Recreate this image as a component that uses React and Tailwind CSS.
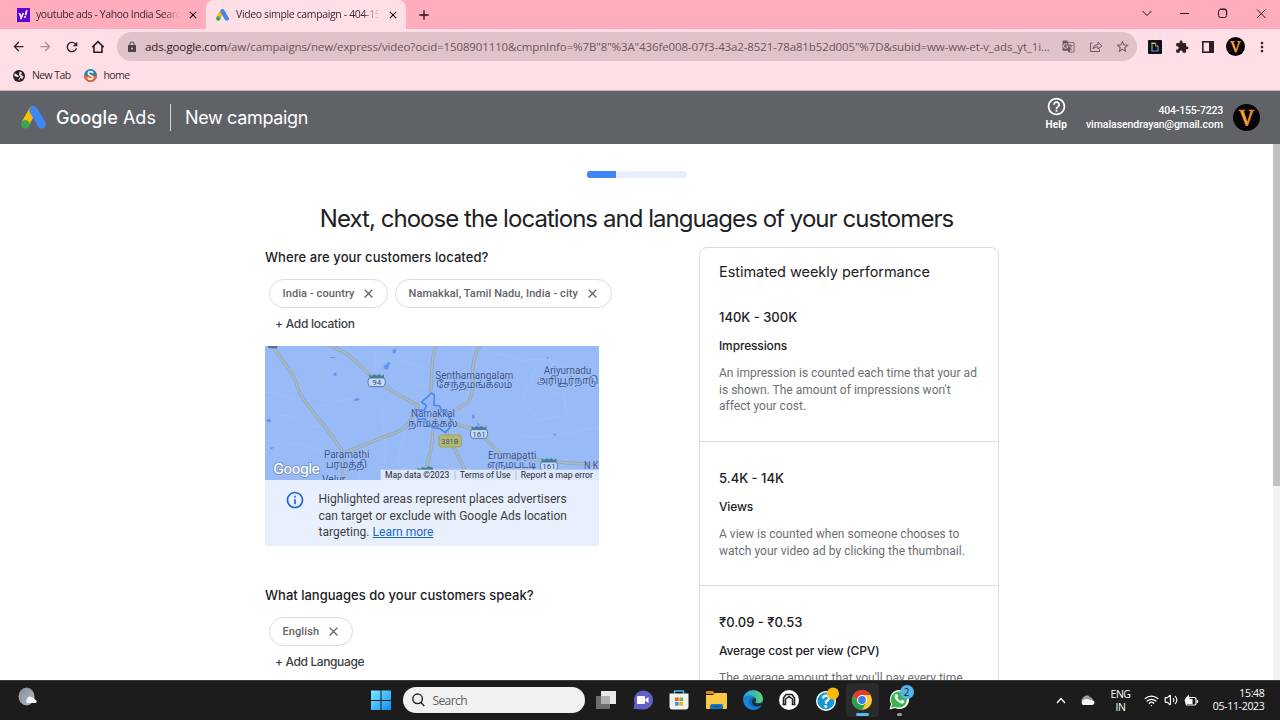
import React from "react";
import {
  MdArrowBack, MdArrowForward, MdRefresh, MdLock, MdStarBorder, MdExtension, MdGTranslate,
  MdHelpOutline, MdInfoOutline, MdMoreVert, MdClose, MdAdd,
} from "react-icons/md";
import { LuVolume2, LuWifi } from "react-icons/lu";

const SANS = "font-['Inter',sans-serif]";
const UI = "font-['Open_Sans',sans-serif]";

function AdsLogo({ className }) {
  return (
    <svg className={className} viewBox="0 0 74 68">
      <path d="M35 0 C29 1 25 6 22 12 L3 45 L24 57 L38 30 Z" fill="#fbbc04" />
      <path d="M37 13 L61 54" stroke="#4285f4" strokeWidth="25" strokeLinecap="round" />
      <circle cx="13" cy="54" r="12.5" fill="#34a853" />
    </svg>
  );
}

function VAvatar({ className }) {
  return (
    <svg className={className} viewBox="0 0 28 28">
      <circle cx="14" cy="14" r="14" fill="#050403" />
      <path d="M6 6h6.600v1.200h-1.300l3.600 10.900 3.300-10.900h-1.700V6h5.700v1.200h-1.200l-5.500 15.500h-2.200L7.200 7.200H6z" fill="#e8882a" />
      <path d="M9.300 7.600l4.700 13" stroke="#ffc566" strokeWidth=".8" />
    </svg>
  );
}

function Tabs() {
  return (
    <div className={`flex h-[29px] bg-[#ffadbc] text-[10.500px] text-[#3b2a30] ${UI}`}>
      <div className="flex w-[206px] items-center pl-[17px]">
        <svg className="h-[14px] w-[13px] shrink-0" viewBox="0 0 13 14">
          <rect width="13" height="14" fill="#5f01d1" />
          <path d="M2.2 5l1.9 4.2M6.3 5l-2.6 6.3" stroke="#fff" strokeWidth="1.6" fill="none" />
          <path d="M9.8 2.2L8.5 7.2" stroke="#fff" strokeWidth="1.7" />
          <circle cx="8" cy="9" r="1" fill="#fff" />
        </svg>
        <div className="ml-[6px] w-[144px] whitespace-nowrap tracking-[-0.4px] [mask-image:linear-gradient(to_right,#000_88%,transparent)]">youtube ads - Yahoo India Searc</div>
        <MdClose className="ml-[7px] size-[12px] shrink-0 text-black" />
      </div>
      <div className="flex w-[200px] items-center rounded-t-[8px] bg-[#ffdfe6] pl-[10px]">
        <AdsLogo className="h-[12px] w-[13px] shrink-0" />
        <div className="ml-[7px] w-[144px] whitespace-nowrap tracking-[-0.36px] [mask-image:linear-gradient(to_right,#000_88%,transparent)]">Video simple campaign - 404-15</div>
        <MdClose className="ml-[7px] size-[12px] shrink-0 text-black" />
      </div>
      <div className="flex w-[36px] items-center justify-center"><MdAdd className="size-[16px] text-[#24161a]" /></div>
      <div className="flex flex-1 items-center justify-end pb-[3px] text-[#24161a]">
        <svg className="h-[12px] w-[148px]" viewBox="0 0 148 12" fill="none" stroke="currentColor">
          <path d="M10.500 4l4.500 4.500L19.500 4" />
          <path d="M48 6.500h9" />
          <rect x="86.500" y="2.500" width="8" height="8" rx="2" />
          <path d="M88 2h4.500a2 2 0 0 1 2.200 2v4" />
          <path d="M125 2.500l8.500 8.500M133.500 2.500L125 11" />
        </svg>
      </div>
    </div>
  );
}

function Toolbar() {
  return (
    <div className={`flex h-[35px] items-center bg-[#ffdfe6] text-[#2b2024] ${UI}`}>
      <MdArrowBack className="ml-[11px] size-[15px]" />
      <MdArrowForward className="ml-[12px] size-[15px] text-[#a88d95]" />
      <MdRefresh className="ml-[11px] size-[16px]" />
      <svg className="ml-[11px] size-[14px]" viewBox="0 0 14 14" fill="none" stroke="currentColor" strokeWidth="1.6">
        <path d="M1.300 7.200L7 1.700l5.700 5.500M3 6v6.200h8V6" />
      </svg>
      <div className="ml-[12px] flex h-[29px] w-[1020px] shrink-0 items-center rounded-full bg-[#dfc3c9] text-[#6a575c]">
        <MdLock className="ml-[9px] size-[12px] text-[#4a4144]" />
        <div className="ml-[7px] w-[905px] whitespace-nowrap text-[11.500px] tracking-[-0.122px]"><span className="text-[#2b2024]">ads.google.com</span>/aw/campaigns/new/express/video?ocid=1508901110&amp;cmpnInfo=%7B"8"%3A"436fe008-07f3-43a2-8521-78a81b52d005"%7D&amp;subid=ww-ww-et-v_ads_yt_1i...</div>
        <MdGTranslate className="ml-[12px] size-[13px]" />
        <svg className="ml-[14px] h-[13px] w-[14px]" viewBox="0 0 14 13" fill="none" stroke="currentColor">
          <path d="M3.500 3H1.500v8.500h9V9.500M4 9c.3-3 2-4.300 5-4.400V2.300L13 5.800 9 9V6.900C6.700 6.900 5.200 7.500 4 9z" />
        </svg>
        <MdStarBorder className="ml-[12px] size-[15px]" />
      </div>
      <svg className="ml-[11px] h-[14px] w-[14px]" viewBox="0 0 14 14">
        <rect width="14" height="14" rx="1" fill="#141018" />
        <path d="M4 3v8" stroke="#19d98f" strokeWidth="1.200" /><path d="M3.500 11h7" stroke="#8b5cf6" strokeWidth="1.200" />
        <path d="M10 6v5" stroke="#21b7f3" strokeWidth="1.200" /><path d="M3.500 3.300H8" stroke="#f5e65b" strokeWidth="1.200" />
        <path d="M7.600 3v2.800H10" stroke="#f65c6a" strokeWidth="1.200" fill="none" />
      </svg>
      <MdExtension className="ml-[13px] size-[14px]" />
      <svg className="ml-[13px] h-[12px] w-[12px]" viewBox="0 0 12 12"><rect x=".8" y=".8" width="10.400" height="10.400" fill="none" stroke="#2b2024" strokeWidth="1.600" /><rect x="7" width="5" height="12" fill="#2b2024" /></svg>
      <VAvatar className="ml-[12px] size-[19px]" />
      <MdMoreVert className="ml-[9px] size-[16px]" />
    </div>
  );
}

function Bookmarks() {
  return (
    <div className={`flex h-[27px] items-center border-b border-[#c9b3b9] bg-[#ffdfe6] pb-[3px] text-[10.500px] text-[#3b2a30] ${UI}`}>
      <svg className="ml-[13px] size-[12px]" viewBox="0 0 12 12">
        <circle cx="6" cy="6" r="6" fill="#252124" />
        <path d="M1.500 3.500c2 .2 2.500 1.500 4 2 .8 1-.5 2-1.500 1.500L1.200 6zM6.500 1.500L9 2.500 8 5l2.500 1-1 3-2.500-1-.5 2.500-1-.5.500-2 1.500-1L6 4.500z" fill="#f7dbe1" />
      </svg>
      <span className="ml-[7px] w-[39px] whitespace-nowrap pt-px tracking-[-0.6px]">New Tab</span>
      <svg className="ml-[13px] size-[13px]" viewBox="0 0 13 13">
        <circle cx="6.500" cy="6.500" r="6.500" fill="#2380b8" />
        <path d="M0 6.500h13a6.500 6.500 0 0 1-13 0z" fill="#ee6132" />
        <path d="M9 4.200C8.500 2 4.200 2.200 4.300 4.500s4.600 1.700 4.500 4-4.500 2.300-4.900 0" fill="none" stroke="#fff" strokeWidth="1.600" />
      </svg>
      <span className="ml-[6.500px] pt-px tracking-[-0.6px]">home</span>
    </div>
  );
}

function AdsHeader() {
  return (
    <div className={`flex h-[53px] items-center bg-[#5f6368] text-white ${SANS}`}>
      <AdsLogo className="ml-[21px] h-[23px] w-[25px]" />
      <span className="ml-[10px] w-[100px] whitespace-nowrap text-[18px] tracking-[0.05px]"><span className="font-medium">Google</span> Ads</span>
      <div className="ml-[14px] h-[27px] w-px bg-[#d5d7d9]" />
      <span className="ml-[14px] text-[18px] tracking-[-0.35px]">New campaign</span>
      <div className="ml-auto mr-[19px] flex flex-col items-center pb-[7px] font-['Roboto',sans-serif]">
        <MdHelpOutline className="mt-[-1px] size-[21px]" />
        <span className="mt-[1px] text-[10px] font-bold leading-[13px] tracking-[0.2px]">Help</span>
      </div>
      <div className="text-right font-['Roboto',sans-serif] text-[10.500px] font-medium leading-[13.500px] tracking-[-0.06px]">
        <div className="tracking-[-0.2px]">404-155-7223</div>
        <div>vimalasendrayan@gmail.com</div>
      </div>
      <VAvatar className="ml-[10px] mr-[20px] size-[27px]" />
    </div>
  );
}

function Chip({ label, className }) {
  return (
    <div className={`flex h-[29px] items-center justify-between rounded-full border border-[#dadce0] pl-[12.500px] pr-[11px] font-['Roboto',sans-serif] text-[11px] font-medium text-[#5f6368] ${className}`}>
      <span className="whitespace-nowrap pt-px tracking-[0.09px]">{label}</span>
      <MdClose className="size-[15px]" />
    </div>
  );
}

function Shield({ x, y, n }) {
  return (
    <g transform={`translate(${x} ${y})`}>
      <path d="M-22 -20l7 5 8-5 7 4 7-4 8 5 7-5v14h-44z" fill="#3d8290" />
      <path d="M-22 -9h44c6 8 5 20-2 26h-40c-7-5-8-18-2-26z" fill="#c5d9f8" stroke="#5577aa" strokeWidth="3" />
      <text y="12" textAnchor="middle" fontSize="24" fill="#37507f">{n}</text>
    </g>
  );
}

const roads = [
  "M40 16C60 60 105 90 117 152C140 200 185 235 246 330L250 420",
  "M195 10C260 30 290 65 325 98C390 155 430 170 480 198",
  "M495 235C540 240 565 240 640 268C690 300 710 330 730 348C800 350 870 370 1018 372",
  "M528 16C510 70 520 110 512 160",
  "M660 16C620 85 655 130 628 184L590 207",
  "M475 196C450 235 455 260 400 280C340 300 310 320 255 335",
  "M518 270C522 320 505 350 492 420",
  "M560 270C580 325 600 350 618 395",
];
const lanes = [
  "M16 155C90 160 110 185 155 205C230 185 240 180 300 170", "M350 16C340 60 350 90 345 115",
  "M380 90C430 120 460 140 510 140", "M690 45L730 40 780 60 870 55 900 110 870 150 915 165 920 225 835 240 790 175 830 80",
  "M640 110C700 110 730 100 770 90", "M370 210C360 260 400 320 360 420", "M400 20L430 60 520 90",
  "M90 310C140 300 180 345 240 335", "M280 340C310 350 290 390 300 420", "M720 350C680 370 640 370 610 395",
  "M40 240C70 200 110 250 180 260", "M760 280C830 300 860 290 1018 260", "M430 260C440 320 400 340 420 380",
];
const lakes = ["M372 78l14-14 6 4-8 20-12-2z", "M398 30l10-6 2 12-10 4z", "M280 180l12-8 10 4-10 6z", "M220 100l8-4 4 8-8 4z", "M20 240l8-6 8 10-12 2z", "M860 50l8 0-4 6z", "M878 280l12 2-4 6z", "M30 322l12-2-6 8z", "M636 225l6-4 4 12-8 2z", "M652 245l8 8-4 6z", "M208 50l22 0-12 4z"];

function Place({ x, y, w, size = 30, children }) {
  return <text x={x} y={y} fontSize={size} textLength={w} lengthAdjust="spacingAndGlyphs">{children}</text>;
}

function MapView() {
  return (
    <svg className="block h-[134px] w-[334px] font-['Roboto','Noto_Sans_Tamil','Noto_Sans',sans-serif]" viewBox="16 17 1002 402" preserveAspectRatio="none">
      <rect x="16" y="16" width="1002" height="404" fill="#98baf6" />
      {lanes.map((d) => <path key={d} d={d} fill="none" stroke="#a1c0f7" strokeWidth="3" />)}
      {lakes.map((d) => <path key={d} d={d} fill="#6496f4" />)}
      {roads.map((d) => <path key={d} d={d} fill="none" stroke="#91a9b8" strokeWidth="10" />)}
      {roads.map((d) => <path key={d} d={d} fill="none" stroke="#a9bac4" strokeWidth="5" />)}
      <path d="M486 185L516 158 524 164 523 195 540 197 545 210 560 209 566 228 574 240 570 262 557 277 540 265 520 262 500 248 496 235 475 238 468 208 494 210 500 196z" fill="#91b6f8" fillOpacity=".5" stroke="#4a88f0" strokeWidth="5" />
      <Shield x={351} y={122} n="94" />
      <Shield x={658} y={277} n="161" />
      <Shield x={868} y={374} n="161" />
      <path d="M474 382l8 4 8-6 8 4 8-6 14 4v12h-46z" fill="#3d8290" />
      <path d="M24 16h30l-2 8h-26z" fill="#52729c" />
      <rect x="538" y="284" width="67" height="36" rx="8" fill="#b5ba6d" stroke="#95a364" strokeWidth="3" />
      <g fill="#36528e" stroke="#b0caf8" strokeWidth="2" paintOrder="stroke">
        <text x="545" y="311" fontSize="22" textLength="51" strokeWidth="0">381B</text>
        <Place x={527} y={115} w={234}>Senthamangalam</Place>
        <Place x={530} y={143} w={228}>சேந்தமங்கலம்</Place>
        <Place x={852} y={100} w={143}>Ariyurnadu</Place>
        <Place x={832} y={132} w={184}>அரியூர்நாடு</Place>
        <Place x={454} y={230} w={132}>Namakkal</Place>
        <Place x={446} y={260} w={148}>நாமக்கல்</Place>
        <Place x={193} y={354} w={136}>Paramathi</Place>
        <Place x={199} y={384} w={123}>பரமத்தி</Place>
        <Place x={685} y={355} w={145}>Erumapatti</Place>
        <Place x={683} y={384} w={147}>எருமபட்டி</Place>
        <Place x={187} y={427} w={70}>Velur</Place>
        <Place x={973} y={386} w={43}>N K</Place>
      </g>
      <text x="41" y="400" fontSize="43" fontWeight="500" fill="#fff" stroke="#6e8cc0" strokeWidth="4" paintOrder="stroke" textLength="140" fontFamily="Inter">Google</text>
      <rect x="363" y="388" width="655" height="32" fill="#dde7f8" />
      <path d="M586 392v28M769 392v28" stroke="#9aa9c4" strokeWidth="2" />
      <g fill="#222a35">
        <Place x={376} y={413} w={193} size={25}>Map data ©2023</Place>
        <Place x={600} y={413} w={153} size={25}>Terms of Use</Place>
        <Place x={783} y={413} w={217} size={25}>Report a map error</Place>
      </g>
    </svg>
  );
}

function Stat({ value, name, className, children }) {
  return (
    <div className={`pl-[19px] ${className}`}>
      <div className="text-[13px] font-medium leading-[20px] text-[#202124]">{value}</div>
      <div className="mt-[10px] text-[12px] font-medium leading-[18px] tracking-[-0.15px] text-[#202124]">{name}</div>
      <div className="mt-[10px] whitespace-nowrap font-['Roboto',sans-serif] text-[12px] leading-[16.700px] tracking-[0.020px] text-[#6b6f74]">{children}</div>
    </div>
  );
}

function Content() {
  return (
    <div className={`flex h-[536px] overflow-hidden bg-white text-[#202124] ${SANS}`}>
      <div className="flex w-[1273px] flex-col">
        <div className="mx-auto mt-[27px] h-[7px] w-[100px] shrink-0 overflow-hidden rounded-[3px] bg-[#e8f0fe]"><div className="h-full w-[29px] bg-[#4285f4]" /></div>
        <h1 className="mt-[25px] whitespace-nowrap text-center text-[24px] leading-[32px] tracking-[-0.95px]">Next, choose the locations and languages of your customers</h1>
        <div className="ml-[265px] mt-[12px] flex">
          <div className="w-[434px] shrink-0">
            <h2 className="text-[13px] font-medium leading-[20px] tracking-[0.07px]">Where are your customers located?</h2>
            <div className="ml-[4px] mt-[12px] flex gap-[7px]">
              <Chip label="India - country" className="w-[119px]" />
              <Chip label="Namakkal, Tamil Nadu, India - city" className="w-[217px]" />
            </div>
            <div className="ml-[10px] mt-[7px] text-[12px] font-medium leading-[18px] tracking-[-0.27px] text-[#3c4043]">+ Add location</div>
            <div className="mt-[13px] w-[334px] bg-[#e8f0fe]">
              <MapView />
              <div className="flex h-[66px]">
                <MdInfoOutline className="ml-[20px] mt-[10px] size-[20px] text-[#1a67d2]" />
                <div className="ml-[13.500px] mt-[11px] whitespace-nowrap font-['Roboto',sans-serif] text-[12px] leading-[16.700px] tracking-[0.015px] text-[#3c4043]">Highlighted areas represent places advertisers<br />can target or exclude with Google Ads location<br />targeting. <span className="text-[#1a67d2] underline">Learn more</span></div>
              </div>
            </div>
            <h2 className="mt-[39px] text-[13px] font-medium leading-[20px] tracking-[0.01px]">What languages do your customers speak?</h2>
            <div className="ml-[4px] mt-[12px] flex"><Chip label="English" className="w-[84px]" /></div>
            <div className="ml-[10px] mt-[7px] text-[12px] font-medium leading-[18px] tracking-[-0.38px] text-[#3c4043]">+ Add Language</div>
          </div>
          <div className="h-[500px] w-[300px] shrink-0 rounded-[8px] border border-[#dadce0]">
            <div className="ml-[19px] mt-[14px] text-[14.500px] leading-[20px] tracking-[-0.05px]">Estimated weekly performance</div>
            <Stat value="140K - 300K" name="Impressions" className="mt-[25px] h-[135px] border-b border-[#dadce0]">An impression is counted each time that your ad<br />is shown. The amount of impressions won't<br />affect your cost.</Stat>
            <Stat value="5.4K - 14K" name="Views" className="h-[144px] border-b border-[#dadce0] pt-[26px]">A view is counted when someone chooses to<br />watch your video ad by clicking the thumbnail.</Stat>
            <Stat value="₹0.09 - ₹0.53" name="Average cost per view (CPV)" className="pt-[26px]">The average amount that you'll pay every time</Stat>
          </div>
        </div>
      </div>
      <div className="w-[7px] bg-[#f1f1f1]"><div className="h-[342px] bg-[#c1c1c1]" /></div>
    </div>
  );
}

function TaskCell({ children, className = "" }) {
  return <div className={`flex h-full w-[36.600px] items-center justify-center ${className}`}>{children}</div>;
}

function Taskbar() {
  return (
    <div className={`flex h-[40px] items-center border-t border-[#3a3a3a] bg-[#1c1c1c] pb-px ${UI}`}>
      <svg className="mb-[6px] ml-[18px] h-[20px] w-[21px]" viewBox="0 0 21 20">
        <defs><linearGradient id="moon" x2="1" y2="1"><stop stopColor="#848b96" /><stop offset="1" stopColor="#b4bac2" /></linearGradient></defs>
        <ellipse cx="8.500" cy="9.500" rx="8" ry="9" fill="url(#moon)" />
        <path d="M9 16a3 3 0 0 1 0-4 3 3 0 0 1 5-1.600 3 3 0 0 1 3 2c2.500 1.500 2 3.600 0 3.600z" fill="#f3f4f7" />
      </svg>
      <svg className="ml-[332px] h-[20px] w-[20px]" viewBox="0 0 20 20">
        <defs><linearGradient id="win" x2="1" y2="1"><stop stopColor="#7bebff" /><stop offset="1" stopColor="#0b8df2" /></linearGradient></defs>
        <path d="M0 .5h9.500V10H0zM10.500.5H20V10h-9.500zM0 11h9.500v9H0zM10.500 11H20v9h-9.500z" fill="url(#win)" />
      </svg>
      <div className="ml-[12px] flex h-[26px] w-[182px] items-center rounded-full bg-[#f1f1f1] text-[12px] text-[#606060]">
        <svg className="ml-[9px] h-[14px] w-[13px]" viewBox="0 0 13 14" fill="none" stroke="#222" strokeWidth="1.400"><circle cx="5.600" cy="5.800" r="4.800" /><path d="M9 9.500l3.300 3.500" /></svg>
        <span className="ml-[7.500px] pt-px tracking-[-0.6px]">Search</span>
      </div>
      <div className="ml-[3px] flex h-full">
        <TaskCell><svg className="h-[20px] w-[20px]" viewBox="0 0 20 20"><rect x="5" y="1" width="15" height="13" fill="#e9e9e9" /><rect y="6" width="14" height="13" fill="#6d6d6d" /><rect x="5" y="6" width="9" height="8" fill="#b0b0b0" /></svg></TaskCell>
        <TaskCell><svg className="h-[20px] w-[20px]" viewBox="0 0 20 20"><path d="M.5 19l1-6A9.500 9.500 0 1 1 10 19.500z" fill="#6260c4" /><rect x="4" y="6" width="8" height="8" rx="1" fill="#fff" /><path d="M12.500 9l3-2v6l-3-2z" fill="#fff" /></svg></TaskCell>
        <TaskCell><svg className="h-[20px] w-[20px]" viewBox="0 0 20 20"><path d="M5.500 4V1h9v3" fill="none" stroke="#3fb7e8" strokeWidth="1.500" /><path d="M.5 3.500h19v13q0 3-3 3h-13q-3 0-3-3z" fill="#f2f2f2" /><rect x="6" y="7.500" width="3.700" height="3.700" fill="#ef5a2b" /><rect x="10.400" y="7.500" width="3.700" height="3.700" fill="#7bb53a" /><rect x="6" y="12" width="3.700" height="3.700" fill="#2f9fe0" /><rect x="10.400" y="12" width="3.700" height="3.700" fill="#f6b51d" /></svg></TaskCell>
        <TaskCell><svg className="h-[20px] w-[21px]" viewBox="0 0 21 20"><path d="M0 2q0-1 1-1h6l2 3H0z" fill="#d78d0b" /><path d="M0 5h7l2-2h11q1 0 1 1v14q0 1-1 1H1q-1 0-1-1z" fill="#fac944" /><path d="M4 19v-3q0-2 2-2h9q2 0 2 2v3z" fill="#1672bd" /><path d="M7 16.500h7" stroke="#0c4d87" /></svg></TaskCell>
        <TaskCell>
          <svg className="h-[20px] w-[20px]" viewBox="0 0 20 20">
            <defs><linearGradient id="edge" x2="1"><stop stopColor="#219fdd" /><stop offset="1" stopColor="#58d66c" /></linearGradient></defs>
            <circle cx="10" cy="10" r="10" fill="#1467b8" />
            <path d="M.2 9C1-2 19-3 20 9c0 3-3 5-7 4-1-.4-.6-1 0-2 .7-5-8-7-12.800-2z" fill="url(#edge)" />
            <path d="M6.500 10c-2 4 2 10 11.800 6-4 6-16.300 5.500-18-6C1 5 8 4 11.500 7c-3 0-4.500 1.500-5 3z" fill="#1b85d4" />
            <path d="M12.900 11c-.6 1-1 1.600 0 2 3 1 5.800.2 6.900-1l-.8 3c-4 3-11 1-10-4 .4-2 2-3.500 3.500-3 .8.700.9 1.900.4 3z" fill="#17314a" />
          </svg>
        </TaskCell>
        <TaskCell><svg className="h-[20px] w-[20px]" viewBox="0 0 20 20"><circle cx="10" cy="10" r="10" fill="#fff" /><path d="M3.500 14.500h3V8.500M16.500 14.500h-3V8.500M4.500 14V8L7 4.500h6L15.500 8v6M6.500 9L10 6.500 13.500 9" fill="none" stroke="#222" strokeWidth="1.500" /></svg></TaskCell>
        <TaskCell><svg className="h-[26px] w-[26px]" viewBox="0 0 26 26"><circle cx="13" cy="14" r="10" fill="#fff" /><circle cx="13" cy="14" r="8.500" fill="#1298d3" /><path d="M10 11.500q.5-3 3.200-2.800 3 .3 2.600 3-.4 1.500-2.800 3v2" fill="none" stroke="#fff" strokeWidth="2.200" /><circle cx="12.700" cy="19.500" r="1.400" fill="#fff" /><circle cx="20" cy="6.500" r="6" fill="#fdbb08" /></svg></TaskCell>
        <TaskCell>
          <div className="flex h-[34px] w-[33px] flex-col items-center rounded-[4px] bg-[#2b2b2b] pt-[7px]">
            <svg className="h-[20px] w-[20px] shrink-0" viewBox="0 0 20 20"><circle cx="10" cy="10" r="10" fill="#fcc934" /><path d="M1.340 5A10 10 0 0 1 18.660 5H10L5.700 12.500z" fill="#e33b2e" /><path d="M1.340 5A10 10 0 0 0 10 20l4.300-7.500-8.600 0z" fill="#28a148" /><circle cx="10" cy="10" r="5" fill="#fff" /><circle cx="10" cy="10" r="3.900" fill="#3b7ce9" /></svg>
            <div className="mt-[3px] h-[3px] w-[13px] shrink-0 rounded-full bg-[#5cb9ee]" />
          </div>
        </TaskCell>
        <TaskCell>
          <div className="relative flex h-[34px] w-[33px] flex-col items-center pt-[6px]">
            <svg className="size-[21px] shrink-0" viewBox="0 0 21 21"><path d="M.5 20.500L2 15a9.600 9.600 0 1 1 4 4z" fill="#fff" /><path d="M2 19l1.200-4a8 8 0 1 1 3 2.700z" fill="#38b54d" /><path d="M6.500 5.500q1.500-1 2 0l.7 1.800-1 1.200q1.300 2.600 3.600 3.500l1.200-1.200 2.300 1q.5 2-1.500 2.800-2 .4-5-2-3.500-3-3.200-5.500.1-.9.900-1.600z" fill="#fff" /></svg>
            <div className="absolute left-[17px] top-[2px] flex h-[14px] w-[14px] items-center justify-center rounded-full bg-[#54b3ea] text-[10px] text-[#12293a]">2</div>
            <div className="mt-[3px] h-[3px] w-[5px] shrink-0 rounded-full bg-[#9b9b9b]" />
          </div>
        </TaskCell>
      </div>
      <div className="ml-auto mr-[15.500px] flex items-center text-white">
        <svg className="h-[7px] w-[10px]" viewBox="0 0 10 7" fill="none" stroke="#fff" strokeWidth="1.300"><path d="M1 6l4-4.500L9 6" /></svg>
        <svg className="ml-[14px] h-[10px] w-[15px]" viewBox="0 0 15 10"><path d="M2 7a3 3 0 0 1 1-4 4 4 0 0 1 7-1 4 4 0 0 1 3 3z" fill="#9c9c9c" /><path d="M3 10a3 3 0 0 1 0-5q4-2 7 0c3-.500 5 1 4.500 3q-.5 2-2.500 2z" fill="#f5f5f5" /></svg>
        <div className="ml-[14px] w-[24px] pt-px text-center text-[10.500px] leading-[13px] tracking-[-0.5px]">ENG<br />IN</div>
        <LuWifi className="ml-[11px] size-[15px]" />
        <LuVolume2 className="ml-[5px] size-[14px]" />
        <svg className="ml-[6px] h-[13px] w-[15px]" viewBox="0 0 15 13"><rect x="2" y="3.500" width="10" height="7.500" rx="1.500" fill="none" stroke="#fff" strokeWidth="1.200" /><path d="M13.500 6v3" stroke="#fff" strokeWidth="1.300" /><rect x="3.500" y="5" width="5" height="5" fill="#fff" /><path d="M.5 6.500L4.500.5l1.500 6-3 4z" fill="#fff" /></svg>
        <div className="ml-[12px] w-[54px] whitespace-nowrap text-right text-[10.500px] leading-[13px] tracking-[-0.3px]">15:48<br />05-11-2023</div>
      </div>
    </div>
  );
}

export default function App() {
  return (
    <div className="h-[720px] w-[1280px] overflow-hidden">
      <Tabs />
      <Toolbar />
      <Bookmarks />
      <AdsHeader />
      <Content />
      <Taskbar />
    </div>
  );
}
